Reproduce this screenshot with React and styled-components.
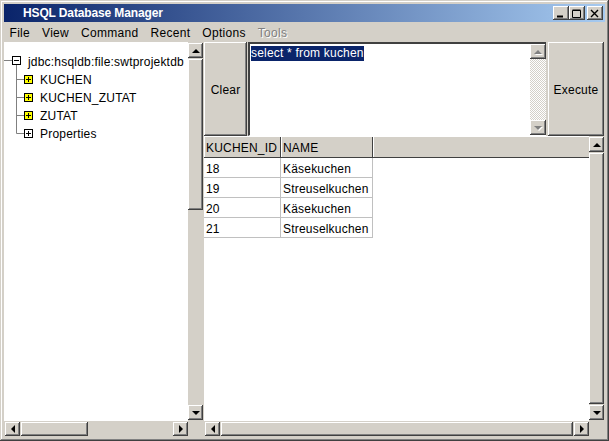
import React from 'react'
import styled, { createGlobalStyle } from 'styled-components'

const Global = createGlobalStyle`
  html, body { margin: 0; padding: 0; background: #d4d0c8; }
  * { box-sizing: border-box; }
`

const face = '#d4d0c8'
const raised = 'inset -1px -1px 0 #404040, inset 1px 1px 0 #ffffff, inset -2px -2px 0 #808080'

const Win = styled.div`
  width: 609px;
  height: 441px;
  padding: 4px;
  display: flex;
  flex-direction: column;
  background: ${face};
  font: 12px "Liberation Sans", Arial, sans-serif;
  letter-spacing: 0.2px;
  color: #000;
  overflow: hidden;
  box-shadow: inset -1px -1px 0 #404040, inset 1px 1px 0 ${face}, inset -2px -2px 0 #808080, inset 2px 2px 0 #ffffff;
`
const TitleBar = styled.div`
  height: 18px;
  flex: none;
  margin-bottom: 1px;
  padding: 0 2px 0 19px;
  display: flex;
  align-items: center;
  background: linear-gradient(90deg, #0a246a, #a6caf0);
  color: #fff;
  font: bold 12px "Liberation Sans", Tahoma, sans-serif;
  letter-spacing: -0.13px;
`
const TitleText = styled.span`
  flex: 1;
`
const CapBtn = styled.div`
  width: 16px;
  height: 14px;
  margin-left: ${p => p.$gap || 0}px;
  box-shadow: ${raised};
  background: ${face};
  display: flex;
  align-items: center;
  justify-content: center;
`
const MenuBar = styled.div`
  height: 19px;
  flex: none;
  display: flex;
  align-items: center;
  padding: 1px 0 0 5.5px;
  gap: 12px;
  letter-spacing: 0.3px;
`
const MenuItem = styled.span`
  color: ${p => (p.$off ? '#808080' : '#000')};
  text-shadow: ${p => (p.$off ? '1px 1px 0 #fff' : 'none')};
`
const Body = styled.div`
  flex: 1;
  display: flex;
  min-height: 0;
`
const LeftPane = styled.div`
  width: 200px;
  flex: none;
  display: grid;
  grid-template-columns: 184px 16px;
  grid-template-rows: 379px 16px;
`
const Tree = styled.div`
  background: #fff;
  padding-top: 10px;
  display: flex;
  flex-direction: column;
`
const TreeRow = styled.div`
  height: 18px;
  display: flex;
  align-items: center;
  gap: ${p => p.$gap}px;
  white-space: nowrap;
`
const TreeLabel = styled.span`
  padding-top: 2px;
`
const Corner = styled.div`
  background: ${face};
`
const Bar = styled.div`
  display: flex;
  flex-direction: ${p => (p.$horizontal ? 'row' : 'column')};
  padding: ${p => (p.$horizontal ? '1px 0 1px 1px' : p.$flush ? '0' : '1px 1px 1px 0')};
  width: ${p => (p.$horizontal ? 'auto' : '16px')};
  flex: none;
  background: ${p => (p.$dither
    ? `repeating-conic-gradient(#ffffff 0 25%, ${face} 0 50%) 0 0 / 2px 2px`
    : face)};
`
const ArrowBtn = styled.div`
  width: ${p => (p.$horizontal ? '15px' : 'auto')};
  height: ${p => (p.$horizontal ? 'auto' : '15px')};
  flex: none;
  background: ${face};
  box-shadow: ${raised};
  display: flex;
  align-items: center;
  justify-content: center;
`
const Thumb = styled.div`
  flex: ${p => (p.$size ? `0 0 ${p.$size}px` : '1')};
  margin: ${p => (p.$horizontal ? '0 1px' : '1px 0')};
  background: ${face};
  box-shadow: ${raised};
`
const Track = styled.div`
  flex: 1;
`
const ArrowIcon = styled.svg`
  fill: ${p => (p.$off ? '#808080' : '#000')};
  filter: ${p => (p.$off ? 'drop-shadow(1px 1px 0 #fff)' : 'none')};
`
const RightPane = styled.div`
  flex: 1;
  display: flex;
  flex-direction: column;
  min-width: 0;
`
const QueryRow = styled.div`
  height: 94px;
  flex: none;
  display: flex;
`
const BigButton = styled.div`
  width: ${p => p.$w}px;
  flex: none;
  margin-left: ${p => p.$gap || 0}px;
  padding-top: 2px;
  display: flex;
  align-items: center;
  justify-content: center;
  background: ${face};
  box-shadow: ${raised};
`
const QueryBox = styled.div`
  width: 298px;
  flex: none;
  margin-left: 1px;
  display: flex;
  background: #fff;
  border-top: 2px solid #404040;
  border-left: 2px solid #404040;
  border-bottom: 1px solid #fff;
`
const QueryText = styled.div`
  flex: 1;
  padding: 2px 0 0 1px;
`
const Selected = styled.span`
  background: #0a246a;
  color: #fff;
  line-height: 14px;
  display: inline-block;
  height: 15px;
`
const ResultArea = styled.div`
  flex: 1;
  display: grid;
  grid-template-columns: 385px 16px;
  grid-template-rows: 285px 16px;
  min-height: 0;
`
const TableWrap = styled.div`
  background: #fff;
  display: flex;
  flex-direction: column;
`
const HeadRow = styled.div`
  height: 22px;
  flex: none;
  display: grid;
  grid-template-columns: 77px 92px 1fr;
  background: ${face};
  border-top: 1px solid #fff;
  border-bottom: 1px solid #404040;
`
const HeadCell = styled.div`
  padding: 2px 0 0 2px;
  display: flex;
  align-items: center;
  border-right: 1px solid #404040;
  box-shadow: inset 1px 0 0 #fff;
  &:last-child { border-right: 0; }
`
const DataRow = styled.div`
  height: 20px;
  display: grid;
  grid-template-columns: 77px 92px;
`
const DataCell = styled.div`
  padding: 2px 0 0 2px;
  display: flex;
  align-items: center;
  border-right: 1px solid #c0c0c0;
  border-bottom: 1px solid #c0c0c0;
`

function Arrow({ dir, off }) {
  const points = {
    up: '4,0 8,4 0,4',
    down: '0,0 8,0 4,4',
    left: '4,0 4,8 0,4',
    right: '0,0 4,4 0,8',
  }[dir]
  const across = dir === 'up' || dir === 'down'
  return (
    <ArrowIcon $off={off} width={across ? 8 : 4} height={across ? 4 : 8} viewBox={across ? '0 0 8 4' : '0 0 4 8'}>
      <polygon points={points} />
    </ArrowIcon>
  )
}

function RootIcon() {
  return (
    <svg width="20" height="18" viewBox="0 0 20 18">
      <path d="M0 8.5h8" stroke="#808080" />
      <path d="M12.5 13v5" stroke="#808080" />
      <rect x="8.5" y="4.5" width="8" height="8" fill="#fff" stroke="#000" />
      <path d="M10 8.5h5" stroke="#000" />
    </svg>
  )
}

function ChildIcon({ yellow, last }) {
  return (
    <svg width="30" height="18" viewBox="0 0 30 18">
      <path d={last ? 'M12.5 0v9.5' : 'M12.5 0v18'} stroke="#808080" fill="none" />
      <path d="M12.5 9.5h8" stroke="#808080" />
      <rect x="20.5" y="5.5" width="8" height="8" fill={yellow ? '#ffff00' : '#fff'} stroke="#000" />
      <path d="M22 9.5h5M24.5 7v5" stroke="#000" fill="none" />
    </svg>
  )
}

function Scroll({ horizontal, thumb, off }) {
  const [a, b] = horizontal ? ['left', 'right'] : ['up', 'down']
  return (
    <Bar $horizontal={horizontal} $dither={off} $flush={off}>
      <ArrowBtn $horizontal={horizontal}><Arrow dir={a} off={off} /></ArrowBtn>
      {thumb === 'fill' ? <Thumb $horizontal={horizontal} /> : thumb && <Thumb $horizontal={horizontal} $size={thumb} />}
      {thumb !== 'fill' && <Track />}
      <ArrowBtn $horizontal={horizontal}><Arrow dir={b} off={off} /></ArrowBtn>
    </Bar>
  )
}

const rows = [
  ['18', 'Käsekuchen'],
  ['19', 'Streuselkuchen'],
  ['20', 'Käsekuchen'],
  ['21', 'Streuselkuchen'],
]

export default function App() {
  return (
    <Win>
      <Global />
      <TitleBar>
        <TitleText>HSQL Database Manager</TitleText>
        <CapBtn>
          <svg width="10" height="9" viewBox="0 0 10 9"><path d="M1 7.5h6" stroke="#000" strokeWidth="2" /></svg>
        </CapBtn>
        <CapBtn>
          <svg width="10" height="9" viewBox="0 0 10 9"><path d="M0.5 1.5h8v7h-8zM0.5 1h8" stroke="#000" fill="none" /></svg>
        </CapBtn>
        <CapBtn $gap={2}>
          <svg width="10" height="9" viewBox="0 0 10 9"><path d="M1 1l7 7M8 1l-7 7" stroke="#000" strokeWidth="1.4" /></svg>
        </CapBtn>
      </TitleBar>
      <MenuBar>
        <MenuItem>File</MenuItem>
        <MenuItem>View</MenuItem>
        <MenuItem>Command</MenuItem>
        <MenuItem>Recent</MenuItem>
        <MenuItem>Options</MenuItem>
        <MenuItem $off>Tools</MenuItem>
      </MenuBar>
      <Body>
        <LeftPane>
          <Tree>
            <TreeRow $gap={4}><RootIcon /><TreeLabel>jdbc:hsqldb:file:swtprojektdb</TreeLabel></TreeRow>
            <TreeRow $gap={6}><ChildIcon yellow /><TreeLabel>KUCHEN</TreeLabel></TreeRow>
            <TreeRow $gap={6}><ChildIcon yellow /><TreeLabel>KUCHEN_ZUTAT</TreeLabel></TreeRow>
            <TreeRow $gap={6}><ChildIcon yellow /><TreeLabel>ZUTAT</TreeLabel></TreeRow>
            <TreeRow $gap={6}><ChildIcon last /><TreeLabel>Properties</TreeLabel></TreeRow>
          </Tree>
          <Scroll thumb={151} />
          <Scroll horizontal thumb={67} />
          <Corner />
        </LeftPane>
        <RightPane>
          <QueryRow>
            <BigButton $w={43}>Clear</BigButton>
            <QueryBox>
              <QueryText><Selected>select * from kuchen</Selected></QueryText>
              <Scroll off />
            </QueryBox>
            <BigButton $w={56} $gap={2}>Execute</BigButton>
          </QueryRow>
          <ResultArea>
            <TableWrap>
              <HeadRow>
                <HeadCell>KUCHEN_ID</HeadCell>
                <HeadCell>NAME</HeadCell>
                <HeadCell />
              </HeadRow>
              {rows.map(r => (
                <DataRow key={r[0]}>
                  <DataCell>{r[0]}</DataCell>
                  <DataCell>{r[1]}</DataCell>
                </DataRow>
              ))}
            </TableWrap>
            <Scroll thumb="fill" />
            <Scroll horizontal thumb="fill" />
            <Corner />
          </ResultArea>
        </RightPane>
      </Body>
    </Win>
  )
}
